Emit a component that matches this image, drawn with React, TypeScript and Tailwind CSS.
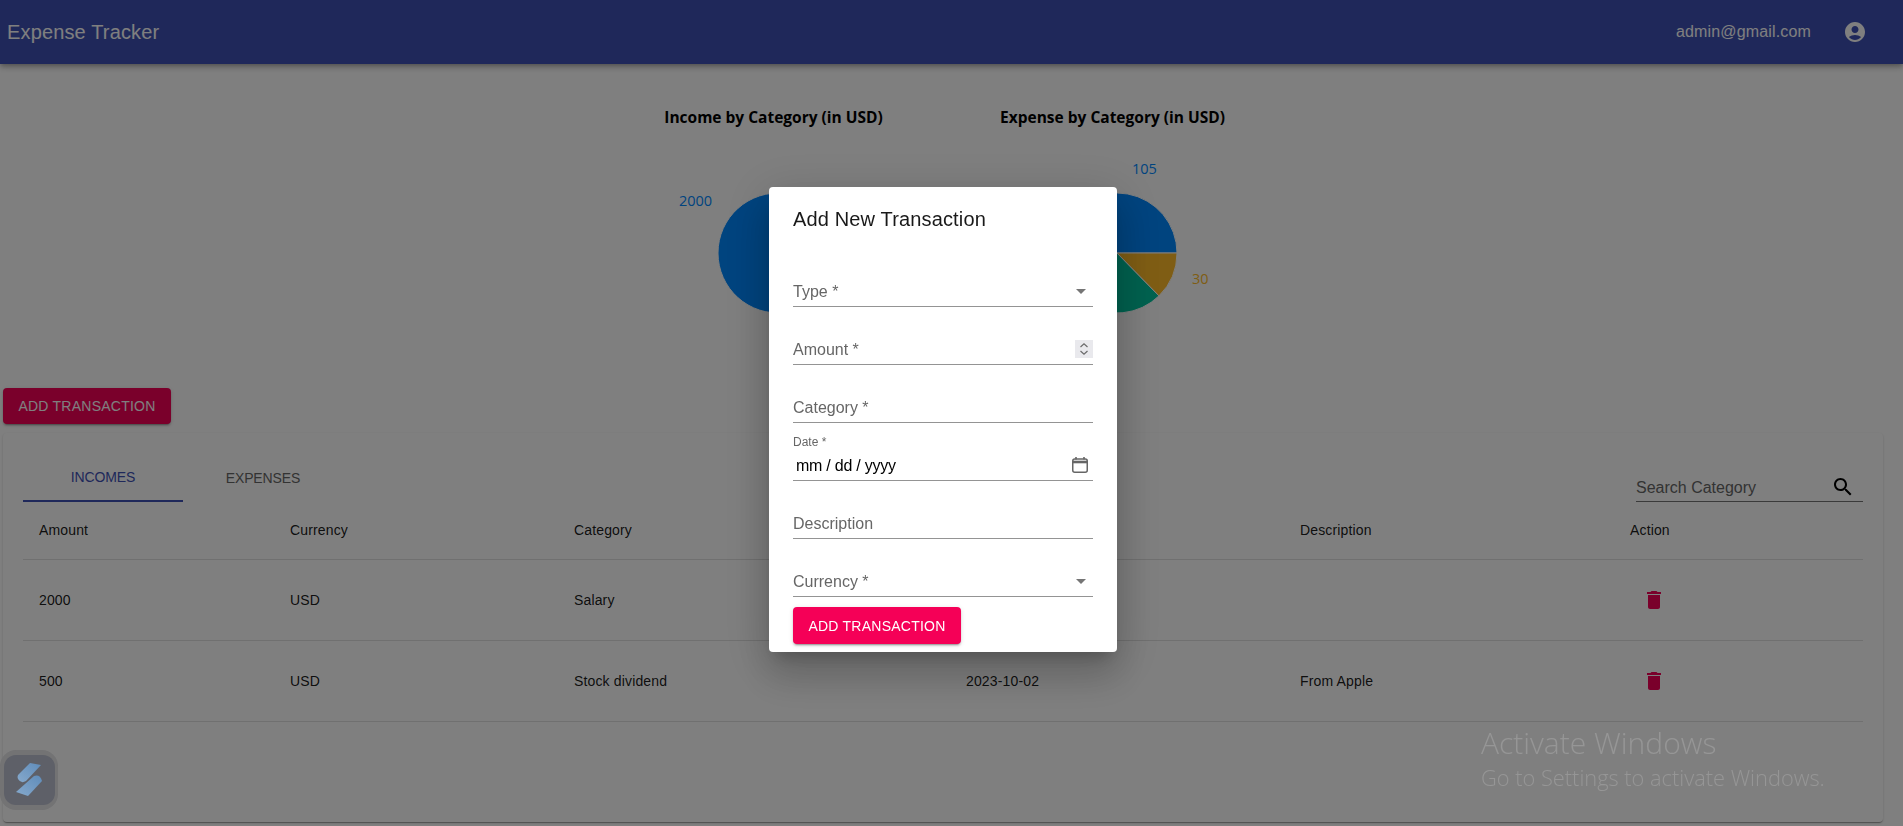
const polar = (cx: number, cy: number, r: number, deg: number) => {
  const a = (deg * Math.PI) / 180;
  return [cx + r * Math.cos(a), cy - r * Math.sin(a)];
};
const slice = (start: number, end: number) => {
  const [x1, y1] = polar(174, 124, 60, start);
  const [x2, y2] = polar(174, 124, 60, end);
  const large = end - start > 180 ? 1 : 0;
  return `M174 124L${x1} ${y1}A60 60 0 ${large} 0 ${x2} ${y2}Z`;
};

function Pie({ title, slices, labels }: { title: string; slices: { s: number; e: number; c: string }[]; labels: { x: number; y: number; t: string; c: string }[] }) {
  return (
    <div className="w-[339px] flex flex-col items-center">
      <div className="h-6 leading-6 text-[15.5px] font-bold text-black whitespace-nowrap" style={{ fontFamily: '"Open Sans", sans-serif' }}>{title}</div>
      <svg width="339" height="251" className="block">
        {slices.map((p) => (
          <path key={p.c} d={slice(p.s, p.e)} fill={p.c} stroke="#fff" strokeWidth="1" />
        ))}
        {labels.map((l) => (
          <text key={l.t} x={l.x} y={l.y} fill={l.c} fontSize="14.5" dominantBaseline="central" fontFamily='"Open Sans", sans-serif'>{l.t}</text>
        ))}
      </svg>
    </div>
  );
}

const Caret = () => (
  <svg viewBox="0 0 24 24" className="w-6 h-6 fill-[#757575] shrink-0"><path d="M7 10l5 5 5-5z" /></svg>
);

const Trash = () => (
  <svg viewBox="0 0 24 24" className="w-6 h-6 fill-[#f50057] ml-3 block"><path d="M6 19c0 1.1.9 2 2 2h8c1.1 0 2-.9 2-2V7H6v12zM19 4h-3.5l-1-1h-5l-1 1H5v2h14V4z" /></svg>
);

function Field({ label, right }: { label: string; right?: React.ReactNode }) {
  return (
    <div className="h-[58px] flex flex-col justify-end">
      <div className="h-[32px] flex items-center justify-between border-b border-[#949494] text-base text-[#666666]">
        <span className="pt-[2px]">{label}</span>
        {right}
      </div>
    </div>
  );
}

const rows = [
  { amount: '2000', cat: 'Salary', date: '2023-10-01', desc: '' },
  { amount: '500', cat: 'Stock dividend', date: '2023-10-02', desc: 'From Apple' },
];
const cols = ['w-[251px]', 'w-[284px]', 'w-[392px]', 'w-[334px]', 'w-[330px]', 'w-[249px]'];

export default function App() {
  return (
    <div className="relative min-h-[826px] bg-white" style={{ fontFamily: '"Liberation Sans", Arial, sans-serif' }}>
      <header className="h-16 bg-[#3f51b5] text-white flex items-center justify-between pl-[7px] pr-[36px] shadow-[0_2px_4px_-1px_rgba(0,0,0,0.2),0_4px_5px_0_rgba(0,0,0,0.14),0_1px_10px_0_rgba(0,0,0,0.12)]">
        <div className="text-xl tracking-[0.15px]">Expense Tracker</div>
        <div className="flex items-center gap-[32px]">
          <span className="text-base tracking-[0.15px]">admin@gmail.com</span>
          <svg viewBox="0 0 24 24" className="w-6 h-6 fill-white"><path d="M12 2C6.48 2 2 6.48 2 12s4.48 10 10 10 10-4.48 10-10S17.52 2 12 2zm0 4c1.93 0 3.5 1.57 3.5 3.5S13.93 13 12 13s-3.5-1.57-3.5-3.5S10.07 6 12 6zm0 14c-2.03 0-4.43-.82-6.14-2.88C7.55 15.8 9.68 15 12 15s4.45.8 6.14 2.12C16.43 19.18 14.03 20 12 20z" /></svg>
        </div>
      </header>

      <main className="pl-[3px] pr-[20px]">
        <section className="flex justify-center pt-[41px] h-[324px]">
          <Pie
            title="Income by Category (in USD)"
            slices={[{ s: 0, e: 288, c: '#0088FE' }, { s: 288, e: 360, c: '#00C49F' }]}
            labels={[{ x: 75, y: 71, t: '2000', c: '#0088FE' }, { x: 262, y: 150, t: '500', c: '#00C49F' }]}
          />
          <Pie
            title="Expense by Category (in USD)"
            slices={[{ s: 0, e: 159.5, c: '#0088FE' }, { s: 159.5, e: 314.4, c: '#00C49F' }, { s: 314.4, e: 360, c: '#FFBB28' }]}
            labels={[{ x: 189, y: 39.5, t: '105', c: '#0088FE' }, { x: 249, y: 149.5, t: '30', c: '#FFBB28' }]}
          />
        </section>

        <button className="h-9 w-[168px] rounded bg-[#f50057] text-white text-sm tracking-[0.24px] shadow-[0_3px_1px_-2px_rgba(0,0,0,0.2),0_2px_2px_0_rgba(0,0,0,0.14),0_1px_5px_0_rgba(0,0,0,0.12)]">ADD TRANSACTION</button>

        <div className="mt-[9px] h-[389px] bg-white rounded px-5 pt-5 shadow-[0_2px_1px_-1px_rgba(0,0,0,0.2),0_1px_1px_0_rgba(0,0,0,0.14),0_1px_3px_0_rgba(0,0,0,0.12)]">
          <div className="flex items-start justify-between h-[49px]">
            <div className="flex h-[49px] text-sm tracking-[-0.1px]">
              <div className="w-40 border-b-2 border-[#3f51b5] text-[#3f51b5] flex items-center justify-center pt-[1px]">INCOMES</div>
              <div className="w-40 text-[#666666] flex items-center justify-center">EXPENSES</div>
            </div>
            <div className="w-[227px] h-[49px] border-b border-[#757575] flex items-end justify-between text-base text-[#666666]">
              <span className="h-7 leading-[30px]">Search Category</span>
              <svg viewBox="0 0 24 24" className="w-6 h-6 fill-black mr-2 mb-[2px]"><path d="M15.5 14h-.79l-.28-.27C15.41 12.59 16 11.11 16 9.5 16 5.91 13.09 3 9.5 3S3 5.91 3 9.5 5.91 16 9.5 16c1.61 0 3.09-.59 4.23-1.57l.27.28v.79l5 4.99L20.49 19l-4.99-5zm-6 0C7.01 14 5 11.99 5 9.5S7.01 5 9.5 5 14 7.01 14 9.5 11.99 14 9.5 14z" /></svg>
            </div>
          </div>
          <table className="table-fixed w-full border-collapse text-sm tracking-[0.15px] text-black/90">
            <thead>
              <tr className="h-[57px] border-b border-[#e0e0e0] text-left">
                {['Amount', 'Currency', 'Category', 'Date', 'Description', 'Action'].map((h, i) => (
                  <th key={h} className={`${cols[i]} pl-4 font-normal`}>{h}</th>
                ))}
              </tr>
            </thead>
            <tbody>
              {rows.map((r) => (
                <tr key={r.amount} className="h-[81px] border-b border-[#e0e0e0]">
                  <td className="pl-4">{r.amount}</td>
                  <td className="pl-4">USD</td>
                  <td className="pl-4">{r.cat}</td>
                  <td className="pl-4">{r.date}</td>
                  <td className="pl-4">{r.desc}</td>
                  <td className="pl-4"><Trash /></td>
                </tr>
              ))}
            </tbody>
          </table>
        </div>
      </main>

      <div className="fixed inset-0 bg-black/50">
        <div className="absolute left-[769px] top-[187px] w-[348px] h-[465px] bg-white rounded px-6 pt-4 pb-2 shadow-[0_11px_15px_-7px_rgba(0,0,0,0.2),0_24px_38px_3px_rgba(0,0,0,0.14),0_9px_46px_8px_rgba(0,0,0,0.12)]">
          <h2 className="h-8 leading-8 text-xl tracking-[0.15px] text-black/90 mb-[14px]">Add New Transaction</h2>
          <Field label="Type *" right={<Caret />} />
          <Field
            label="Amount *"
            right={
              <div className="w-[18px] h-[18px] bg-[#e9e9ed] flex items-center justify-center">
                <svg viewBox="0 0 18 18" className="w-[18px] h-[18px] fill-none stroke-[#6b6b6b]" strokeWidth="1.2"><path d="M5.5 7L9 3.8 12.5 7M5.5 11L9 14.2 12.5 11" /></svg>
              </div>
            }
          />
          <Field label="Category *" />
          <div className="h-[58px] flex flex-col justify-end">
            <div className="text-xs leading-[14px] text-[#666666]">Date *</div>
            <div className="h-[32px] flex items-center justify-between border-b border-[#949494] text-base text-black pl-[3px]">
              <span className="pt-[2px] tracking-[-0.25px]">mm / dd / yyyy</span>
              <svg viewBox="0 0 16 16" className="w-4 h-4 mr-[5px] fill-none stroke-[#666666]" strokeWidth="1.5"><rect x="0.75" y="2" width="14.5" height="13.25" rx="2" /><path d="M1 5h14" strokeWidth="2.6" /><path d="M4 0v2.5M12 0v2.5" strokeWidth="1.6" /></svg>
            </div>
          </div>
          <Field label="Description" />
          <Field label="Currency *" right={<Caret />} />
          <button className="mt-[10px] h-[37px] w-[168px] rounded bg-[#f50057] text-white text-sm tracking-[0.24px] shadow-[0_3px_1px_-2px_rgba(0,0,0,0.2),0_2px_2px_0_rgba(0,0,0,0.14),0_1px_5px_0_rgba(0,0,0,0.12)]">ADD TRANSACTION</button>
        </div>
      </div>

      <div className="fixed left-0 top-[750px] w-[58px] h-[60px] rounded-[16px] bg-[#737374] flex items-center justify-center">
        <div className="w-[51px] h-[50px] rounded-[12px] bg-[#5e6068] flex items-center justify-center">
          <svg viewBox="0 0 40 40" className="w-[40px] h-[40px]">
            <defs>
              <linearGradient id="sg" x1="0" y1="1" x2="1" y2="0">
                <stop offset="0" stopColor="#86a9cc" />
                <stop offset="1" stopColor="#5f8cba" />
              </linearGradient>
            </defs>
            <path d="M9 15L21 3L32 5L17 21Q12 24 9 19Q8 17 9 15Z" fill="url(#sg)" />
            <path d="M7 32L25 16Q31 14 33 21L19 36Z" fill="url(#sg)" />
          </svg>
        </div>
      </div>

      <div className="fixed left-[1481px] top-[723px] text-[#969696] pointer-events-none" style={{ fontFamily: '"Open Sans", sans-serif' }}>
        <div className="text-[30px] leading-[40px] font-light">Activate Windows</div>
        <div className="text-[21.8px] leading-[30px] font-light">Go to Settings to activate Windows.</div>
      </div>
    </div>
  );
}
